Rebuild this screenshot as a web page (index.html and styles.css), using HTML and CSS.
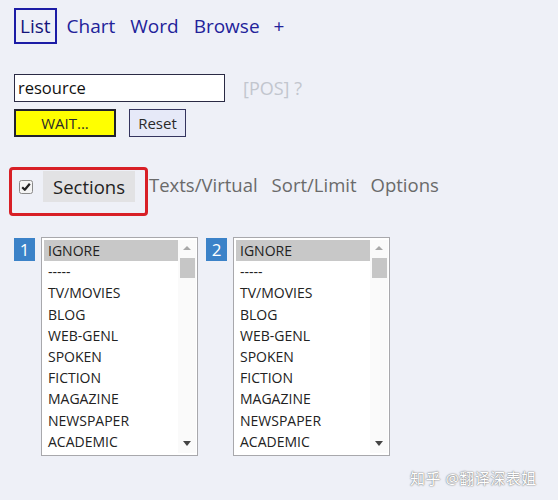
FILE: index.html
```html
<!DOCTYPE html>
<html>
<head>
<meta charset="utf-8">
<link rel="stylesheet" href="styles.css">
</head>
<body>
<div class="page">
  <nav class="tabs">
    <span class="tab active">List</span>
    <span class="tab">Chart</span>
    <span class="tab">Word</span>
    <span class="tab">Browse</span>
    <span class="tab plus">+</span>
  </nav>

  <div class="search-row">
    <div class="input">resource</div>
    <span class="pos">[POS] ?</span>
  </div>
  <div class="btn-row">
    <div class="btn wait">WAIT...</div>
    <div class="btn reset">Reset</div>
  </div>

  <div class="sub-tabs">
    <div class="highlight">
      <span class="check"><svg width="14" height="14" viewBox="0 0 14 14"><rect x="0.5" y="0.5" width="13" height="13" rx="2" fill="#f4f4f4" stroke="#8a8a8a"/><path d="M3.2 7.2 L5.8 9.8 L10.8 3.8" fill="none" stroke="#222" stroke-width="2.2" stroke-linejoin="round"/></svg></span>
      <span class="sub active">Sections</span>
    </div>
    <span class="sub">Texts/Virtual</span>
    <span class="sub">Sort/Limit</span>
    <span class="sub">Options</span>
  </div>

  <div class="lists">
    <div class="group">
      <span class="badge">1</span>
      <div class="listbox">
        <ul class="options">
          <li class="sel">IGNORE</li>
          <li>-----</li>
          <li>TV/MOVIES</li>
          <li>BLOG</li>
          <li>WEB-GENL</li>
          <li>SPOKEN</li>
          <li>FICTION</li>
          <li>MAGAZINE</li>
          <li>NEWSPAPER</li>
          <li>ACADEMIC</li>
        </ul>
        <div class="scrollbar">
          <span class="arrow up"></span>
          <span class="thumb"></span>
          <span class="track"></span>
          <span class="arrow down"></span>
        </div>
      </div>
    </div>
    <div class="group">
      <span class="badge">2</span>
      <div class="listbox">
        <ul class="options">
          <li class="sel">IGNORE</li>
          <li>-----</li>
          <li>TV/MOVIES</li>
          <li>BLOG</li>
          <li>WEB-GENL</li>
          <li>SPOKEN</li>
          <li>FICTION</li>
          <li>MAGAZINE</li>
          <li>NEWSPAPER</li>
          <li>ACADEMIC</li>
        </ul>
        <div class="scrollbar">
          <span class="arrow up"></span>
          <span class="thumb"></span>
          <span class="track"></span>
          <span class="arrow down"></span>
        </div>
      </div>
    </div>
  </div>
  <div class="watermark">知乎 @翻译深表姐</div>
</div>
</body>
</html>
```

FILE: styles.css
```css
* { box-sizing: border-box; }
html, body { margin: 0; padding: 0; }
body {
  background: #eef0f7;
  font-family: "Open Sans", "Noto Sans", "Noto Sans CJK SC", sans-serif;
  width: 558px;
  height: 500px;
  overflow: hidden;
}
.page {
  position: relative;
  padding: 8px 0 0 14px;
  height: 500px;
}
.tabs {
  display: flex;
  align-items: center;
  height: 36px;
}
.tab {
  font-size: 19px;
  color: #22229a;
  margin-right: 15px;
  line-height: 32px;
}
.tab.active {
  border: 2px solid #1c1ca6;
  padding: 0 4px;
  color: #14147a;
  margin-right: 10px;
  height: 36px;
  line-height: 32px;
}
.tab.plus { margin-left: -1px; }

.search-row {
  display: flex;
  align-items: center;
  margin-top: 30px;
  height: 28px;
}
.input {
  width: 211px;
  height: 28px;
  border: 1px solid #2a2a44;
  background: #fff;
  font-size: 16.5px;
  line-height: 26px;
  padding-left: 3px;
  color: #111;
}
.pos {
  margin-left: 18px;
  font-size: 18px;
  color: #c2c6ce;
}
.btn-row {
  display: flex;
  margin-top: 7px;
  gap: 13px;
}
.btn {
  height: 28px;
  font-size: 15px;
  line-height: 24px;
  text-align: center;
  color: #2a2a2a;
}
.btn.wait {
  width: 102px;
  background: #ffff00;
  border: 2px solid #22222e;
}
.btn.reset {
  width: 57px;
  background: #e6e9f8;
  border: 1px solid #34345e;
  line-height: 26px;
}

.sub-tabs {
  display: flex;
  align-items: flex-start;
  margin-top: 30px;
  margin-left: -5px;
}
.highlight {
  display: flex;
  align-items: flex-start;
  width: 139px;
  height: 49px;
  border: 3px solid #d81f26;
  border-radius: 4px;
  padding: 1px 0 0 7px;
}
.check { display: flex; margin-right: 10px; margin-top: 9px; }
.sub {
  font-size: 18.5px;
  color: #6a6a6a;
  margin-right: 14px;
  line-height: 31px;
  margin-top: 2px;
}
.sub.active {
  background: #e2e2e4;
  color: #222;
  padding: 0 10px;
  height: 31px;
  line-height: 31px;
  margin-right: 0;
  margin-top: 0;
}
.highlight + .sub { margin-left: 1px; }

.lists {
  display: flex;
  gap: 8px;
  margin-top: 21px;
}
.group {
  display: flex;
  align-items: flex-start;
  gap: 6px;
}
.badge {
  width: 21px;
  height: 23px;
  margin-top: 1px;
  background: #3b82c8;
  color: #fff;
  font-size: 17px;
  line-height: 23px;
  text-align: center;
}
.listbox {
  display: flex;
  width: 157px;
  height: 219px;
  border: 1px solid #a8a8ac;
  background: #fff;
  padding: 2px 1px 2px 2px;
}
.options {
  list-style: none;
  margin: 0;
  padding: 0;
  flex: 1;
}
.options li {
  height: 21.2px;
  line-height: 21.2px;
  font-size: 14px;
  color: #222;
  padding-left: 4px;
}
.options li.sel { background: #c8c8c8; }
.scrollbar {
  width: 18px;
  display: flex;
  flex-direction: column;
  align-items: center;
  background: #fafafa;
}
.arrow {
  width: 0;
  height: 0;
  border-left: 4px solid transparent;
  border-right: 4px solid transparent;
}
.arrow.up {
  border-bottom: 4px solid #a8a8a8;
  margin-top: 6px;
}
.thumb {
  width: 15px;
  height: 20px;
  background: #c6c6c6;
  margin-top: 8px;
}
.track { flex: 1; }
.arrow.down {
  border-top: 5px solid #444;
  margin-bottom: 7px;
}
.watermark {
  position: absolute;
  left: 410px;
  top: 467px;
  font-size: 15px;
  color: #ffffff;
  text-shadow: 0 0 2px #888, 0 0 1px #666;
  letter-spacing: 0.5px;
}
```
